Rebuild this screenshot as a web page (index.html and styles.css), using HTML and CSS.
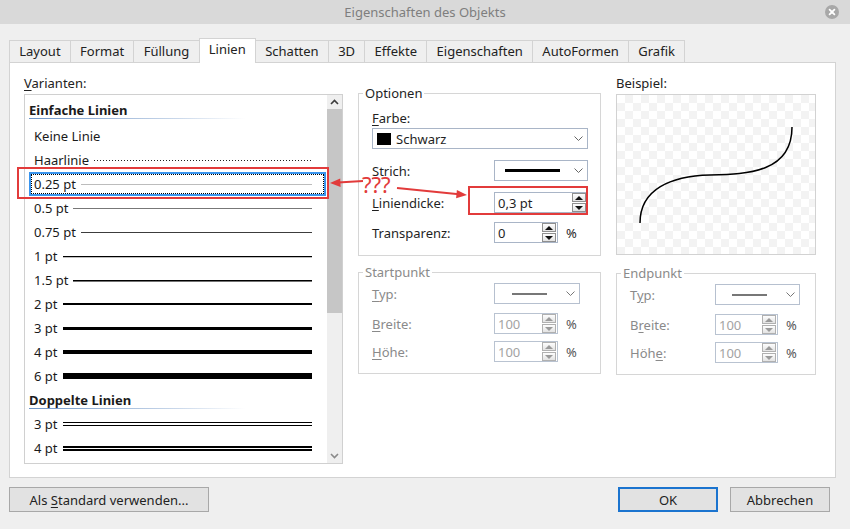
FILE: index.html
```html
<!DOCTYPE html>
<html lang="de">
<head>
<meta charset="utf-8">
<title>Eigenschaften des Objekts</title>
<link rel="stylesheet" href="styles.css">
</head>
<body>
<div class="window">
  <header class="titlebar">
    <span></span>
    <span class="title">Eigenschaften des Objekts</span>
    <span class="close-wrap">
      <span class="close">
        <svg width="14" height="14" viewBox="0 0 14 14"><path d="M4.6 4.6 L9.4 9.4 M9.4 4.6 L4.6 9.4" stroke="#fff" stroke-width="1.8" stroke-linecap="round"/></svg>
      </span>
    </span>
  </header>

  <div class="content">
    <nav class="tabs">
      <span class="tab">Layout</span>
      <span class="tab">Format</span>
      <span class="tab">Füllung</span>
      <span class="tab active">Linien</span>
      <span class="tab">Schatten</span>
      <span class="tab">3D</span>
      <span class="tab">Effekte</span>
      <span class="tab">Eigenschaften</span>
      <span class="tab">AutoFormen</span>
      <span class="tab">Grafik</span>
    </nav>

    <section class="panel">
      <div class="col-list">
        <div class="label"><u>V</u>arianten:</div>
        <div class="listbox">
          <div class="list">
            <div class="head first"><span>Einfache Linien</span><div class="rule"></div></div>
            <div class="row"><span>Keine Linie</span></div>
            <div class="row"><span>Haarlinie</span><div class="line hair"></div></div>
            <div class="row sel"><span>0.25 pt</span><div class="line l025"></div></div>
            <div class="row"><span>0.5 pt</span><div class="line l05"></div></div>
            <div class="row"><span>0.75 pt</span><div class="line l075"></div></div>
            <div class="row"><span>1 pt</span><div class="line l1"></div></div>
            <div class="row"><span>1.5 pt</span><div class="line l15"></div></div>
            <div class="row"><span>2 pt</span><div class="line l2"></div></div>
            <div class="row"><span>3 pt</span><div class="line l3"></div></div>
            <div class="row"><span>4 pt</span><div class="line l4"></div></div>
            <div class="row"><span>6 pt</span><div class="line l6"></div></div>
            <div class="head"><span>Doppelte Linien</span><div class="rule"></div></div>
            <div class="row"><span>3 pt</span><div class="line d3"></div></div>
            <div class="row"><span>4 pt</span><div class="line d4"></div></div>
          </div>
          <div class="scrollbar">
            <div class="sb-btn"><svg width="9" height="6" viewBox="0 0 9 6"><polyline points="1,5 4.5,1.5 8,5" fill="none" stroke="#3c3c3c" stroke-width="1.6"/></svg></div>
            <div class="thumb"></div>
            <div class="track"></div>
            <div class="sb-btn"><svg width="9" height="6" viewBox="0 0 9 6"><polyline points="1,1 4.5,4.5 8,1" fill="none" stroke="#8a8a8a" stroke-width="1.6"/></svg></div>
          </div>
        </div>
      </div>

      <div class="col-mid">
        <fieldset class="group options">
          <legend>Optionen</legend>
          <div class="label"><u>F</u>arbe:</div>
          <div class="combo color">
            <span class="swatch"></span><span class="cval">Schwarz</span>
            <svg class="chev" width="9" height="5" viewBox="0 0 9 5"><polyline points="0.5,0.5 4.5,4.5 8.5,0.5" fill="none" stroke="#666" stroke-width="1"/></svg>
          </div>
          <div class="frow r-strich">
            <span><u>S</u>trich:</span>
            <div class="combo stroke">
              <span class="sline"></span>
              <svg class="chev" width="9" height="5" viewBox="0 0 9 5"><polyline points="0.5,0.5 4.5,4.5 8.5,0.5" fill="none" stroke="#666" stroke-width="1"/></svg>
            </div>
          </div>
          <div class="frow r-dicke">
            <span><u>L</u>iniendicke:</span>
            <div class="spin full">
              <span class="val">0,3 pt</span>
              <span class="arrows"><span class="up"></span><span class="down"></span></span>
            </div>
          </div>
          <div class="frow r-transp">
            <span>Transparenz:</span>
            <div class="unitwrap">
              <div class="spin">
                <span class="val">0</span>
                <span class="arrows"><span class="up"></span><span class="down"></span></span>
              </div>
              <span class="unit">%</span>
            </div>
          </div>
        </fieldset>

        <fieldset class="group point start disabled">
          <legend>Startpunkt</legend>
          <div class="frow r-typ">
            <span><u>T</u>yp:</span>
            <div class="combo arrow">
              <span class="aline"></span>
              <svg class="chev" width="9" height="5" viewBox="0 0 9 5"><polyline points="0.5,0.5 4.5,4.5 8.5,0.5" fill="none" stroke="#777" stroke-width="1"/></svg>
            </div>
          </div>
          <div class="frow r-breite">
            <span><u>B</u>reite:</span>
            <div class="unitwrap">
              <div class="spin">
                <span class="val">100</span>
                <span class="arrows"><span class="up"></span><span class="down"></span></span>
              </div>
              <span class="unit">%</span>
            </div>
          </div>
          <div class="frow r-hoehe">
            <span><u>H</u>öhe:</span>
            <div class="unitwrap">
              <div class="spin">
                <span class="val">100</span>
                <span class="arrows"><span class="up"></span><span class="down"></span></span>
              </div>
              <span class="unit">%</span>
            </div>
          </div>
        </fieldset>
      </div>

      <div class="col-right">
        <div class="label">Beispiel:</div>
        <div class="preview">
          <svg width="198" height="159" viewBox="0 0 198 159"><path d="M23 128 C23 94 54 81 93 80 C132 79 175 77 175 32" fill="none" stroke="#000" stroke-width="1.5"/></svg>
        </div>
        <fieldset class="group point end disabled">
          <legend>Endpunkt</legend>
          <div class="frow r-typ">
            <span>T<u>y</u>p:</span>
            <div class="combo arrow">
              <span class="aline"></span>
              <svg class="chev" width="9" height="5" viewBox="0 0 9 5"><polyline points="0.5,0.5 4.5,4.5 8.5,0.5" fill="none" stroke="#777" stroke-width="1"/></svg>
            </div>
          </div>
          <div class="frow r-breite">
            <span>B<u>r</u>eite:</span>
            <div class="unitwrap">
              <div class="spin">
                <span class="val">100</span>
                <span class="arrows"><span class="up"></span><span class="down"></span></span>
              </div>
              <span class="unit">%</span>
            </div>
          </div>
          <div class="frow r-hoehe">
            <span>Höh<u>e</u>:</span>
            <div class="unitwrap">
              <div class="spin">
                <span class="val">100</span>
                <span class="arrows"><span class="up"></span><span class="down"></span></span>
              </div>
              <span class="unit">%</span>
            </div>
          </div>
        </fieldset>
      </div>
    </section>

    <footer class="buttons">
      <button class="btn wide">Als <u>S</u>tandard verwenden...</button>
      <span class="spacer"></span>
      <button class="btn default">OK</button>
      <button class="btn">Abbrechen</button>
    </footer>
  </div>

  <svg class="annot" width="850" height="529" viewBox="0 0 850 529">
    <rect x="18" y="168" width="310" height="30" fill="none" stroke="#e23b3b" stroke-width="2"/>
    <rect x="469" y="187" width="118" height="27" fill="none" stroke="#e23b3b" stroke-width="2"/>
    <line x1="363" y1="181" x2="338" y2="182.6" stroke="#e23b3b" stroke-width="2"/>
    <polygon points="330,183 340.2,178.6 340.6,187" fill="#e23b3b"/>
    <line x1="397" y1="188" x2="459" y2="194.2" stroke="#e23b3b" stroke-width="2"/>
    <polygon points="467,195 456.9,190 456.1,198.2" fill="#e23b3b"/>
    <text x="362" y="193" class="qtext">???</text>
  </svg>
</div>
</body>
</html>
```

FILE: styles.css
```css
html, body {
  margin: 0;
  padding: 0;
}
body {
  background: #efefef;
  font-family: "Noto Sans", "DejaVu Sans", sans-serif;
  font-size: 13px;
  color: #1f1f1f;
}
u {
  text-decoration: underline;
  text-underline-offset: 2px;
}
.window {
  position: relative;
  width: 850px;
  height: 529px;
  overflow: hidden;
}

/* title bar */
.titlebar {
  height: 24px;
  background: #d9d9d9;
  display: grid;
  grid-template-columns: 1fr auto 1fr;
  align-items: center;
}
.title {
  color: #7e7e7e;
  font-size: 13px;
  line-height: 24px;
}
.close-wrap {
  justify-self: end;
  margin-right: 11px;
  display: flex;
}
.close {
  width: 14px;
  height: 14px;
  border-radius: 50%;
  background: #a8a8a8;
  display: flex;
}

/* content */
.content {
  padding: 14px 0 0 9px;
}
.tabs {
  display: flex;
  align-items: flex-end;
  height: 24px;
}
.tab {
  height: 22px;
  box-sizing: border-box;
  border: 1px solid #d3d3d3;
  border-bottom: none;
  border-left: none;
  padding: 0 9.25px;
  line-height: 20px;
  color: #222;
}
.tab:first-child {
  border-left: 1px solid #d3d3d3;
}
.tab.active {
  height: 25px;
  background: #fff;
  margin-bottom: -1px;
  margin-left: -1px;
  border-left: 1px solid #d3d3d3;
  position: relative;
  z-index: 1;
  line-height: 21px;
}

.panel {
  width: 827px;
  height: 416px;
  box-sizing: border-box;
  background: #fff;
  border: 1px solid #d3d3d3;
  display: grid;
  grid-template-columns: 319px 243px 200px;
  column-gap: 15px;
  align-items: start;
  padding: 12px 0 0 14px;
}

.label {
  line-height: 16px;
  color: #222;
}

/* list */
.col-list .label {
  margin-bottom: 3px;
}
.listbox {
  height: 370px;
  box-sizing: border-box;
  border: 1px solid #d0d0d0;
  display: flex;
}
.list {
  flex: 1;
  padding-top: 3px;
  overflow: hidden;
}
.head {
  height: 24px;
  box-sizing: border-box;
  margin-left: 4px;
  padding-top: 4px;
  font-weight: bold;
  line-height: 16px;
  color: #1a1a1a;
}
.head.first {
  margin-bottom: 2px;
}
.rule {
  width: 216px;
  height: 1px;
  background: linear-gradient(to right, #6c93c6, rgba(108, 147, 198, 0.35) 70%, rgba(108, 147, 198, 0));
}
.row {
  height: 24px;
  box-sizing: border-box;
  margin: 0 1px 0 4px;
  border: 2px solid transparent;
  padding: 0 12px 0 3px;
  display: flex;
  align-items: center;
  line-height: 16px;
  color: #1a1a1a;
}
.row.sel {
  border-color: #3a95ee;
  outline: 1px dotted #000;
  outline-offset: -3px;
}
.line {
  flex: 1;
  margin-left: 5px;
}
.hair {
  height: 1px;
  background: repeating-linear-gradient(to right, #222 0 1px, transparent 1px 3px);
}
.l025 { height: 1px; background: #bcbcbc; }
.l05 { height: 1px; background: #777; }
.l075 { height: 1px; background: #3c3c3c; }
.l1 { height: 1px; background: #000; box-shadow: 0 1px 0 rgba(0, 0, 0, 0.25); }
.l15 { height: 1px; background: #000; box-shadow: 0 1px 0 rgba(0, 0, 0, 0.55); }
.l2 { height: 2px; background: #000; }
.l3 { height: 3px; background: #000; }
.l4 { height: 4px; background: #000; }
.l6 { height: 6px; background: #000; }
.d3 {
  height: 4px;
  box-sizing: border-box;
  border-top: 1px solid #000;
  border-bottom: 1px solid #000;
}
.d4 {
  height: 5px;
  box-sizing: border-box;
  border-top: 2px solid #000;
  border-bottom: 2px solid #000;
}

.scrollbar {
  width: 15px;
  background: #efefef;
  display: flex;
  flex-direction: column;
}
.sb-btn {
  height: 14px;
  display: flex;
  align-items: center;
  justify-content: center;
}
.thumb {
  height: 204px;
  background: #c6c6c6;
}
.track {
  flex: 1;
}

/* groups */
.group {
  margin: 0;
  min-width: 0;
  border: 1px solid #d6d6d6;
}
.group legend {
  padding: 0 2px;
  margin-left: -9px;
  line-height: 16px;
  color: #1f1f1f;
}
.options {
  margin-top: 10px;
  padding: 9px 12px 12px 13px;
}
.options > .label {
  margin-bottom: 2px;
}
.frow {
  display: grid;
  grid-template-columns: 122px auto;
  align-items: center;
}
.r-strich { margin-top: 11px; }
.r-dicke { margin-top: 11px; }
.r-transp { margin-top: 9px; }

.point {
  margin-top: 8px;
  padding: 3px 12px 11px 13px;
}
.end {
  margin-top: 10px;
  padding-right: 15px;
}
.end .frow {
  grid-template-columns: 85px auto;
}
.r-typ { margin-top: 0; }
.r-breite { margin-top: 9px; }
.r-hoehe { margin-top: 7px; }

.disabled legend,
.disabled .frow > span {
  color: #8a8a8a;
}

.combo {
  height: 21px;
  box-sizing: border-box;
  border: 1px solid #a9b5c7;
  background: #fff;
  display: flex;
  align-items: center;
  padding: 0 4px 0 4px;
}
.combo .chev {
  margin-left: auto;
}
.swatch {
  width: 14px;
  height: 12px;
  background: #000;
}
.cval {
  margin-left: 5px;
  line-height: 16px;
}
.combo.stroke {
  padding-left: 10px;
}
.sline {
  width: 55px;
  height: 3px;
  background: #000;
}
.combo.arrow {
  width: 86px;
  padding-left: 17px;
  border-color: #b6c0cf;
}
.end .combo.arrow {
  width: 85px;
  padding-left: 16px;
}
.aline {
  width: 35px;
  height: 2px;
  background: #777;
}

.unitwrap {
  display: flex;
  align-items: center;
}
.unit {
  margin-left: 8px;
}
.disabled .unit {
  color: #555;
}
.spin {
  width: 64px;
  height: 21px;
  box-sizing: border-box;
  border: 1px solid #a9b5c7;
  background: #fff;
  display: flex;
  align-items: center;
  padding-left: 3px;
}
.end .spin {
  width: 63px;
}
.spin.full {
  width: auto;
}
.val {
  flex: 1;
  line-height: 16px;
}
.disabled .spin {
  border-color: #b9c3d1;
}
.disabled .val {
  color: #a3a3a3;
}
.arrows {
  display: flex;
  flex-direction: column;
  gap: 1px;
  margin-right: 1px;
}
.arrows span {
  width: 14px;
  height: 9px;
  box-sizing: border-box;
  border: 1px solid #8f8f8f;
  background: linear-gradient(#fdfdfd, #e3e3e3);
  display: flex;
  align-items: center;
  justify-content: center;
}
.arrows .up::before,
.arrows .down::before {
  content: "";
  width: 0;
  height: 0;
  border-left: 4px solid transparent;
  border-right: 4px solid transparent;
}
.arrows .up::before {
  border-bottom: 4px solid #111;
}
.arrows .down::before {
  border-top: 4px solid #111;
}
.disabled .arrows span {
  border-color: #b0b0b0;
}
.disabled .arrows .up::before {
  border-bottom-color: #9a9a9a;
}
.disabled .arrows .down::before {
  border-top-color: #9a9a9a;
}

/* preview */
.col-right .label {
  margin-bottom: 3px;
}
.preview {
  height: 161px;
  box-sizing: border-box;
  border: 1px solid #d2d2d2;
  background-color: #fff;
  background-image: conic-gradient(#f3f3f3 25%, transparent 0 50%, #f3f3f3 0 75%, transparent 0);
  background-size: 16px 16px;
  display: flex;
}

/* footer */
.buttons {
  display: flex;
  gap: 12px;
  padding: 9px 20px 0 0;
}
.spacer {
  flex: 1;
}
.btn {
  height: 25px;
  width: 100px;
  box-sizing: border-box;
  border: 1px solid #a8a8a8;
  background: #e2e2e2;
  font-family: inherit;
  font-size: 13px;
  color: #222;
  padding: 0;
}
.btn.wide {
  width: 200px;
}
.btn.default {
  border: 2px solid #1b74cf;
}

/* annotations */
.annot {
  position: absolute;
  left: 0;
  top: 0;
  pointer-events: none;
}
.qtext {
  font-family: "Noto Sans", "DejaVu Sans", sans-serif;
  font-size: 22px;
  fill: #e23b3b;
}
```
